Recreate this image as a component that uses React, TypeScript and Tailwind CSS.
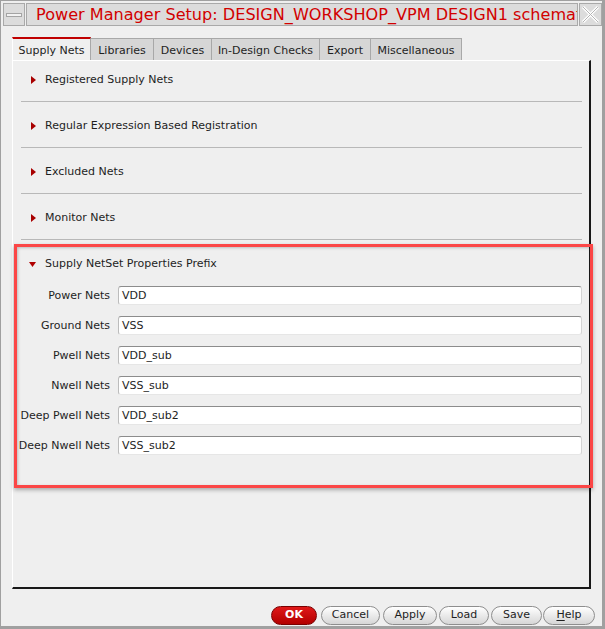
const font = "font-['DejaVu_Sans',sans-serif]";

const tabs = [
  { label: "Supply Nets", w: "w-[79px]", active: true },
  { label: "Libraries", w: "w-[63px]" },
  { label: "Devices", w: "w-[58px]" },
  { label: "In-Design Checks", w: "w-[108px]" },
  { label: "Export", w: "w-[51px]" },
  { label: "Miscellaneous", w: "w-[91px]" },
];

const collapsed = [
  "Registered Supply Nets",
  "Regular Expression Based Registration",
  "Excluded Nets",
  "Monitor Nets",
];

const fields = [
  { label: "Power Nets", value: "VDD" },
  { label: "Ground Nets", value: "VSS" },
  { label: "Pwell Nets", value: "VDD_sub" },
  { label: "Nwell Nets", value: "VSS_sub" },
  { label: "Deep Pwell Nets", value: "VDD_sub2" },
  { label: "Deep Nwell Nets", value: "VSS_sub2" },
];

const buttons = [
  { label: "Cancel", w: "w-[59px]", ml: "ml-[4px]" },
  { label: "Apply", w: "w-[54px]", ml: "ml-[3px]" },
  { label: "Load", w: "w-[50px]", ml: "ml-[2px]" },
  { label: "Save", w: "w-[51px]", ml: "ml-[2px]" },
];

function RightArrow() {
  return (
    <svg width="5" height="8" viewBox="0 0 5 8" className="shrink-0">
      <path d="M0 0 L5 4 L0 8 Z" fill="#a80000" />
    </svg>
  );
}

function DownArrow() {
  return (
    <svg width="7" height="5" viewBox="0 0 7 5" className="shrink-0">
      <path d="M0 0 L7 0 L3.5 5 Z" fill="#b00000" />
    </svg>
  );
}

export default function App() {
  return (
    <div
      className={`${font} flex h-[629px] w-[605px] flex-col border-t border-l border-r-[3px] border-b-[3px] border-[#a0a0a0] bg-[#efefef] text-[11px] text-[#1e1e1e]`}
    >
      {/* title bar */}
      <div className="ml-[2px] mt-[2px] flex h-[23px] gap-[1px]">
        <div className="flex w-[22px] items-center justify-center border border-[#a9a9a9] bg-[#dcdcdc]">
          <div className="h-[4px] w-[16px] border border-[#a4a4a4] bg-[#f2f2f2]" />
        </div>
        <div className="flex min-w-0 flex-1 items-center overflow-hidden whitespace-nowrap border border-[#a9a9a9] bg-[#dcdcdc] pl-[9px] pt-[1px] text-[16.1px] text-[#d20000]">
          Power Manager Setup: DESIGN_WORKSHOP_VPM DESIGN1 schematic
        </div>
        <div className="flex w-[23px] items-center justify-center border border-[#a9a9a9] bg-[#dcdcdc]">
          <svg width="19" height="19" viewBox="0 0 19 19">
            <path d="M2 2 L17 17 M17 2 L2 17" stroke="#ffffff" strokeWidth="3" />
            <path d="M2 2 L17 17 M17 2 L2 17" stroke="#b4b4b4" strokeWidth="1" />
          </svg>
        </div>
      </div>

      {/* tabs */}
      <div className="ml-[11px] mt-[11px] flex h-[23px] items-end">
        {tabs.map((t) =>
          t.active ? (
            <div
              key={t.label}
              className={`${t.w} relative z-10 flex h-[23px] items-center justify-center border-t-2 border-r border-l border-t-[#c00000] border-r-[#a8a8a8] border-l-white bg-[#efefef] pt-[3px]`}
            >
              {t.label}
            </div>
          ) : (
            <div
              key={t.label}
              className={`${t.w} flex h-[22px] items-center justify-center border-t border-r border-[#a8a8a8] bg-[#d6d6d6] pt-[3px]`}
            >
              {t.label}
            </div>
          )
        )}
      </div>

      {/* panel */}
      <div className="mx-[11px] flex h-[529px] flex-col border-t border-l border-r-2 border-b-2 border-t-white border-l-white border-r-[#181818] border-b-[#181818] pl-[8px] pr-[7px]">
        {collapsed.map((title, i) => (
          <div
            key={title}
            className={`${i === 0 ? "pt-[6px]" : "pt-[11px]"} border-b border-[#b8b8b8] pb-[10px]`}
          >
            <div className="flex h-[24px] items-center pl-[10px] pt-[2px]">
              <RightArrow />
              <span className="ml-[9px]">{title}</span>
            </div>
          </div>
        ))}

        <div className="-ml-[7px] -mr-[11px] mt-[4px] border-[3px] border-[#fb4646] pt-[4px] pb-[30px] pr-[8px] shadow-[0_2px_4px_rgba(0,0,0,0.3),inset_1px_1px_3px_rgba(0,0,0,0.22)]">
          <div className="flex h-[24px] items-center pl-[12px] pt-[2px]">
            <DownArrow />
            <span className="ml-[9px]">Supply NetSet Properties Prefix</span>
          </div>
          <div className="mt-[11px] flex flex-col gap-[11px]">
            {fields.map((f) => (
              <div key={f.label} className="flex h-[19px] items-center">
                <div className="w-[93px] shrink-0 pt-[1px] text-right">{f.label}</div>
                <div className="ml-[8px] flex h-[19px] flex-1 items-center rounded-[3px] border border-t-[#8c8c8c] border-r-[#d4d4d4] border-b-[#e6e6e6] border-l-[#bcbcbc] bg-white pl-[3px] pt-[1px]">
                  {f.value}
                </div>
              </div>
            ))}
          </div>
        </div>
      </div>

      {/* buttons */}
      <div className="mt-[17px] flex h-[19px] justify-end pr-[7px]">
        <button className="flex w-[46px] items-center justify-center rounded-full border border-[#7a0000] bg-gradient-to-b from-[#e01818] to-[#b30000] text-[11px] font-bold text-white">
          OK
        </button>
        {buttons.map((b) => (
          <button
            key={b.label}
            className={`${b.w} ${b.ml} flex items-center justify-center rounded-full border border-[#8e8e8e] bg-gradient-to-b from-[#ffffff] to-[#d6d6d6] text-[11px] text-[#1e1e1e]`}
          >
            {b.label}
          </button>
        ))}
        <button className="ml-[1px] flex w-[52px] items-center justify-center rounded-full border border-[#8e8e8e] bg-gradient-to-b from-[#ffffff] to-[#d6d6d6] text-[11px] text-[#1e1e1e]">
          <span className="underline underline-offset-2">H</span>elp
        </button>
      </div>
    </div>
  );
}
